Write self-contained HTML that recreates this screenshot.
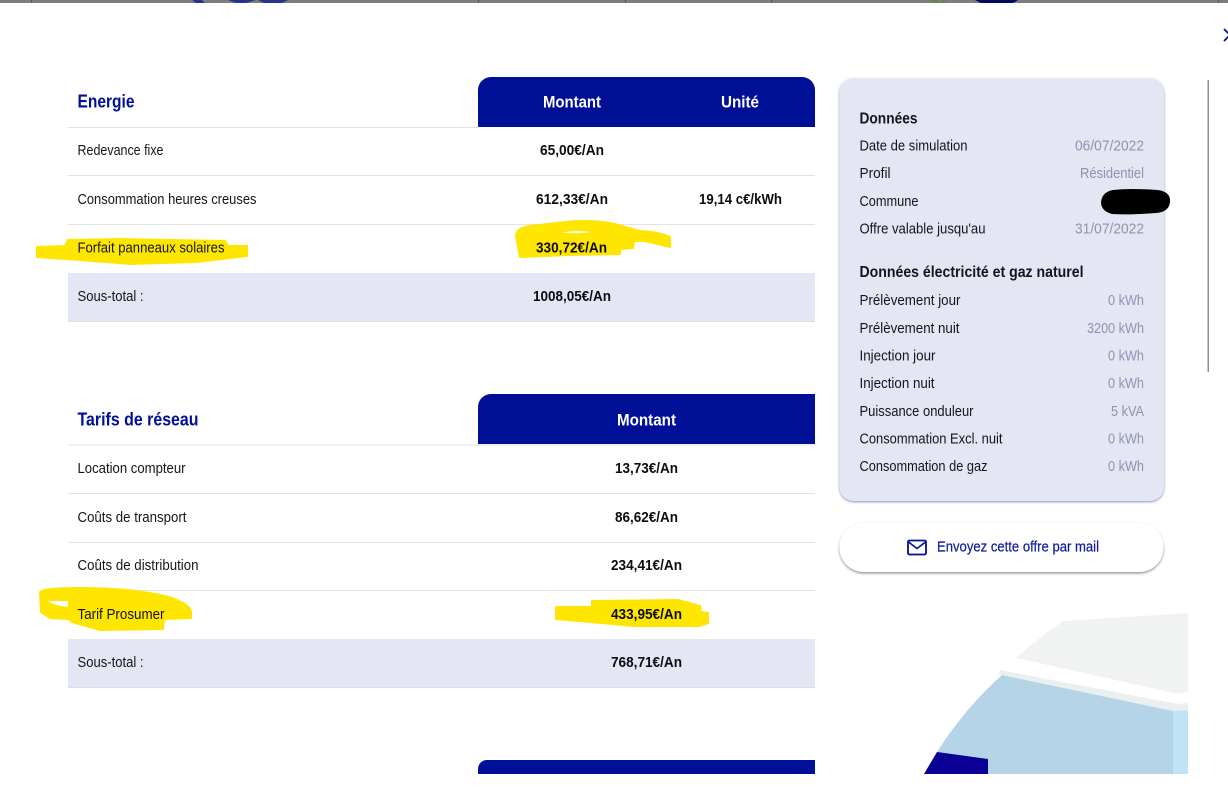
<!DOCTYPE html>
<html lang="fr">
<head>
<meta charset="utf-8">
<title>Offre</title>
<style>
html,body{margin:0;padding:0;background:#fff;width:1228px;height:800px;overflow:hidden}
svg{display:block;position:absolute;left:0;top:0;filter:blur(.25px)}
text{font-family:"Liberation Sans",sans-serif}
.l{font-size:14.5px;fill:#15151c}
.b{font-size:14.5px;font-weight:700;fill:#0c0c12}
.h{font-size:18px;font-weight:700;fill:#000f96}
.w{font-size:17px;font-weight:700;fill:#fff}
.t{font-size:15.5px;font-weight:700;fill:#15151c}
.v{font-size:14.5px;fill:#8d94ae}
</style>
</head>
<body>
<svg width="1228" height="800" viewBox="0 0 1228 800" xmlns="http://www.w3.org/2000/svg">
<defs>
<filter id="s1" x="-10%" y="-10%" width="120%" height="120%"><feDropShadow dx="0" dy="1" stdDeviation="1.4" flood-color="#6d769e" flood-opacity=".8"/></filter>
<filter id="s2" x="-10%" y="-20%" width="120%" height="150%"><feDropShadow dx="0" dy="1.5" stdDeviation="1.4" flood-color="#000" flood-opacity=".42"/></filter>
</defs>

<!-- top strip -->
<rect x="0" y="0" width="1228" height="3" fill="#7d7d7d"/>
<g fill="#5c5c5c"><rect x="31" y="0" width="1" height="3"/><rect x="478" y="0" width="1" height="3"/><rect x="625" y="0" width="1" height="3"/><rect x="771" y="0" width="1" height="3"/><rect x="1218" y="0" width="1" height="3"/></g>
<path d="M192 0h10l3 3h-9zM228 0h28l-10 3h-10zM258 0h30l-6 3h-18z" fill="#26348c"/>
<path d="M930 0h5l4 3h-5zM943 0h3l-2 3h-2z" fill="#5d8a35"/>
<path d="M975 0h43l-5 3h-32z" fill="#000a5e"/>

<!-- close + scrollbar -->
<path d="M1224 29l6 6-6 6" fill="none" stroke="#000f96" stroke-width="1.8"/>
<rect x="1207.5" y="80" width="1.5" height="292" fill="#8f8f8f"/>

<!-- table 1 -->
<path d="M478 127V90a13 13 0 0 1 13-13H802a13 13 0 0 1 13 13V127Z" fill="#001096"/>
<g fill="#e2e2e4">
<rect x="68" y="127" width="410" height="1"/>
<rect x="68" y="175" width="747" height="1"/>
<rect x="68" y="224" width="747" height="1"/>
</g>
<rect x="68" y="273" width="747" height="49" fill="#e4e6f3"/>
<rect x="68" y="321" width="747" height="1" fill="#dcdde3"/>

<!-- table 2 -->
<path d="M478 444V407a13 13 0 0 1 13-13H815V444Z" fill="#001096"/>
<g fill="#e2e2e4">
<rect x="68" y="444.5" width="747" height="1"/>
<rect x="68" y="493" width="747" height="1"/>
<rect x="68" y="542" width="747" height="1"/>
<rect x="68" y="590" width="747" height="1"/>
</g>
<rect x="68" y="639" width="747" height="49" fill="#e4e6f3"/>
<rect x="68" y="687" width="747" height="1" fill="#dcdde3"/>

<!-- table 3 start -->
<path d="M478 774v-5a9 9 0 0 1 9-9h328v14z" fill="#001096"/>

<!-- yellow marks -->
<g fill="#ffe600" stroke="#ffe600" stroke-width="2" stroke-linejoin="round">
<path d="M37 247L65 246 68 240 120 239 225 241 228 246 247 246 247 256 196 262 130 264 80 260 37 257Z"/>
<path d="M516 236Q516 228 530 226L575 221Q605 220 625 227L640 231Q660 232 670 237L670 247 645 241 634 241 633 248 620 249 620 254 570 255 520 257Z"/>
<path fill-rule="evenodd" d="M40 592Q42 588 80 588Q130 588 165 596 190 603 191 612L191 618 164 619 163 629 100 630 72 622 68 619 50 618 41 612ZM46 600Q50 606 69 608L69 600Z"/>
<path d="M556 607L592 607 592 601 678 600 700 606 701 612 708 613 708 623 699 626 635 626 590 622 556 619Z"/>
</g>
<path d="M562 232.5Q575 230 592 232 575 234 562 232.5Z" fill="#fff"/>

<!-- table 1 text -->
<text class="h" x="77.5" y="107.5" textLength="57" lengthAdjust="spacingAndGlyphs">Energie</text>
<text class="w" x="543" y="107.5" textLength="58" lengthAdjust="spacingAndGlyphs">Montant</text>
<text class="w" x="721" y="107.5" textLength="38" lengthAdjust="spacingAndGlyphs">Unité</text>
<text class="l" x="77.5" y="155" textLength="86" lengthAdjust="spacingAndGlyphs">Redevance fixe</text>
<text class="l" x="77.5" y="204" textLength="179" lengthAdjust="spacingAndGlyphs">Consommation heures creuses</text>
<text class="l" x="77.5" y="252.5" textLength="147" lengthAdjust="spacingAndGlyphs">Forfait panneaux solaires</text>
<text class="l" x="77.5" y="301" textLength="66" lengthAdjust="spacingAndGlyphs">Sous-total :</text>
<text class="b" x="540" y="155" textLength="64" lengthAdjust="spacingAndGlyphs">65,00€/An</text>
<text class="b" x="536" y="204" textLength="72" lengthAdjust="spacingAndGlyphs">612,33€/An</text>
<text class="b" x="536" y="252.5" textLength="71" lengthAdjust="spacingAndGlyphs">330,72€/An</text>
<text class="b" x="533" y="301" textLength="78" lengthAdjust="spacingAndGlyphs">1008,05€/An</text>
<text class="b" x="699" y="204" textLength="83" lengthAdjust="spacingAndGlyphs">19,14 c€/kWh</text>

<!-- table 2 text -->
<text class="h" x="77.5" y="425.5" textLength="121" lengthAdjust="spacingAndGlyphs">Tarifs de réseau</text>
<text class="w" x="617" y="425.5" textLength="59" lengthAdjust="spacingAndGlyphs">Montant</text>
<text class="l" x="77.5" y="473" textLength="108" lengthAdjust="spacingAndGlyphs">Location compteur</text>
<text class="l" x="77.5" y="522" textLength="109" lengthAdjust="spacingAndGlyphs">Coûts de transport</text>
<text class="l" x="77.5" y="570" textLength="121" lengthAdjust="spacingAndGlyphs">Coûts de distribution</text>
<text class="l" x="77.5" y="619" textLength="87" lengthAdjust="spacingAndGlyphs">Tarif Prosumer</text>
<text class="l" x="77.5" y="667" textLength="66" lengthAdjust="spacingAndGlyphs">Sous-total :</text>
<text class="b" x="615" y="473" textLength="63" lengthAdjust="spacingAndGlyphs">13,73€/An</text>
<text class="b" x="615" y="522" textLength="63" lengthAdjust="spacingAndGlyphs">86,62€/An</text>
<text class="b" x="611" y="570" textLength="71" lengthAdjust="spacingAndGlyphs">234,41€/An</text>
<text class="b" x="611" y="619" textLength="71" lengthAdjust="spacingAndGlyphs">433,95€/An</text>
<text class="b" x="611" y="667" textLength="71" lengthAdjust="spacingAndGlyphs">768,71€/An</text>

<!-- side card -->
<rect x="839.5" y="78.5" width="324.5" height="422.5" rx="14" fill="#e4e6f3" filter="url(#s1)"/>
<text class="t" x="859.5" y="123.5" textLength="58" lengthAdjust="spacingAndGlyphs">Données</text>
<text class="l" x="859.5" y="150.5" textLength="108" lengthAdjust="spacingAndGlyphs">Date de simulation</text>
<text class="l" x="859.5" y="178" textLength="31" lengthAdjust="spacingAndGlyphs">Profil</text>
<text class="l" x="859.5" y="206" textLength="59" lengthAdjust="spacingAndGlyphs">Commune</text>
<text class="l" x="859.5" y="233.5" textLength="126" lengthAdjust="spacingAndGlyphs">Offre valable jusqu'au</text>
<text class="v" x="1075" y="150.5" textLength="69" lengthAdjust="spacingAndGlyphs">06/07/2022</text>
<text class="v" x="1080" y="178" textLength="64" lengthAdjust="spacingAndGlyphs">Résidentiel</text>
<text class="v" x="1075" y="233.5" textLength="69" lengthAdjust="spacingAndGlyphs">31/07/2022</text>
<path d="M1113 190Q1130 188 1158 190 1171 192 1170 202 1169 212 1156 213 1130 215 1112 214 1101 211 1101 202 1102 192 1113 190Z" fill="#000"/>

<text class="t" x="859.5" y="277" textLength="224" lengthAdjust="spacingAndGlyphs">Données électricité et gaz naturel</text>
<text class="l" x="859.5" y="305" textLength="101" lengthAdjust="spacingAndGlyphs">Prélèvement jour</text>
<text class="l" x="859.5" y="333" textLength="100" lengthAdjust="spacingAndGlyphs">Prélèvement nuit</text>
<text class="l" x="859.5" y="360.5" textLength="76" lengthAdjust="spacingAndGlyphs">Injection jour</text>
<text class="l" x="859.5" y="388" textLength="75" lengthAdjust="spacingAndGlyphs">Injection nuit</text>
<text class="l" x="859.5" y="416" textLength="114" lengthAdjust="spacingAndGlyphs">Puissance onduleur</text>
<text class="l" x="859.5" y="443.5" textLength="143" lengthAdjust="spacingAndGlyphs">Consommation Excl. nuit</text>
<text class="l" x="859.5" y="471" textLength="128" lengthAdjust="spacingAndGlyphs">Consommation de gaz</text>
<text class="v" x="1108" y="305" textLength="36" lengthAdjust="spacingAndGlyphs">0 kWh</text>
<text class="v" x="1087" y="333" textLength="57" lengthAdjust="spacingAndGlyphs">3200 kWh</text>
<text class="v" x="1108" y="360.5" textLength="36" lengthAdjust="spacingAndGlyphs">0 kWh</text>
<text class="v" x="1108" y="388" textLength="36" lengthAdjust="spacingAndGlyphs">0 kWh</text>
<text class="v" x="1111" y="416" textLength="33" lengthAdjust="spacingAndGlyphs">5 kVA</text>
<text class="v" x="1108" y="443.5" textLength="36" lengthAdjust="spacingAndGlyphs">0 kWh</text>
<text class="v" x="1108" y="471" textLength="36" lengthAdjust="spacingAndGlyphs">0 kWh</text>

<!-- mail button -->
<rect x="839.5" y="523" width="324" height="49" rx="24.5" fill="#fff" filter="url(#s2)"/>
<rect x="908" y="540.5" width="18" height="14" rx="1.5" fill="none" stroke="#000f96" stroke-width="1.8"/>
<path d="M908.5 542l8.5 6.5 8.5-6.5" fill="none" stroke="#000f96" stroke-width="1.6"/>
<text x="937" y="551.5" font-size="14.5" fill="#0f1c9c" stroke="#0f1c9c" stroke-width=".2" textLength="162" lengthAdjust="spacingAndGlyphs">Envoyez cette offre par mail</text>

<!-- illustration -->
<path d="M1063 621L1188 613 1188 692 1178 694 1016 658Q1038 638 1063 621Z" fill="#f1f3f3"/>
<path d="M1000 670L1178 704 1188 703 1188 710 1173 711 1002 675 998 675Z" fill="#ecefef"/>
<path d="M1002 675L1173 711 1173 774 924 774 937 752Q965 708 1002 675Z" fill="#b6d4e8"/>
<path d="M1173 711L1188 710 1188 774 1173 774Z" fill="#c0e3f7"/>
<path d="M937 752L988 759 988 774 924 774Z" fill="#0b0096"/>
</svg>
</body>
</html>
